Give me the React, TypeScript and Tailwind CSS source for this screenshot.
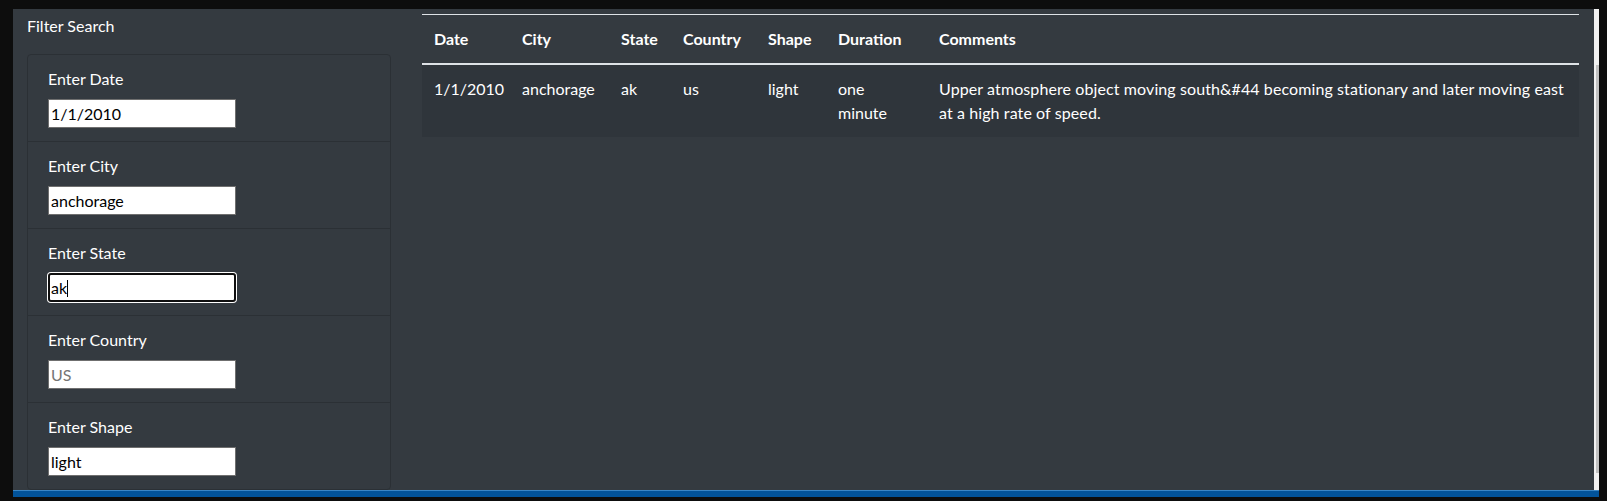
import React from "react";

type Field = { label: string; value: string; placeholder?: string; focused?: boolean };

const fields: Field[] = [
  { label: "Enter Date", value: "1/1/2010" },
  { label: "Enter City", value: "anchorage" },
  { label: "Enter State", value: "ak", focused: true },
  { label: "Enter Country", value: "", placeholder: "US" },
  { label: "Enter Shape", value: "light" },
];

function FieldInput({ f }: { f: Field }) {
  if (f.focused) {
    return (
      <div className="relative w-[188px] h-[29px]">
        <input
          readOnly
          value={f.value}
          className="w-[188px] h-[29px] bg-white text-black text-[16px] border-2 border-[#101010] rounded-[3px] pl-[1px] pr-[2px] outline-none ring-1 ring-white caret-transparent font-['Lato',sans-serif]"
        />
        <span className="absolute left-[19px] top-[7px] w-px h-[17px] bg-black" />
      </div>
    );
  }
  return (
    <input
      readOnly
      value={f.value}
      placeholder={f.placeholder}
      className="w-[188px] h-[29px] bg-white text-black text-[16px] border border-[#6f6f6f] px-[2px] outline-none placeholder:text-[#757575] font-['Lato',sans-serif]"
    />
  );
}

export default function App() {
  return (
    <div className="w-[1607px] h-[501px] bg-[#0d0d0d] pt-[9px] pl-[13px] pr-[8px] pb-[4px] flex flex-col overflow-hidden font-['Lato',sans-serif] text-white text-[16px] leading-[24px]">
      <div className="flex h-[481px]">
        <div className="flex-1 min-w-0 bg-[#343a40] flex overflow-hidden">
          <aside className="w-[378px] shrink-0 pl-[14px]">
            <div className="pt-[5px] h-[45px]">Filter Search</div>
            <div className="w-[364px] border border-[#2b3035] rounded-[4px]">
              {fields.map((f, i) => (
                <div
                  key={f.label}
                  className={
                    i === 0
                      ? "h-[86px] pt-[12px] px-[20px]"
                      : "h-[87px] pt-[12px] px-[20px] border-t border-[#2b3035]"
                  }
                >
                  <div className="h-[24px] mb-[8px]">{f.label}</div>
                  <FieldInput f={f} />
                </div>
              ))}
            </div>
          </aside>
          <main className="ml-[31px] pt-[5px]">
            <table className="w-[1157px] table-fixed border-separate border-spacing-0 text-left">
              <colgroup>
                <col className="w-[88px]" />
                <col className="w-[99px]" />
                <col className="w-[62px]" />
                <col className="w-[85px]" />
                <col className="w-[70px]" />
                <col className="w-[101px]" />
                <col />
              </colgroup>
              <thead>
                <tr>
                  {["Date", "City", "State", "Country", "Shape", "Duration", "Comments"].map((h) => (
                    <th
                      key={h}
                      className="font-bold p-[12px] align-bottom whitespace-nowrap border-t border-b-2 border-[#dee2e6]"
                    >
                      {h}
                    </th>
                  ))}
                </tr>
              </thead>
              <tbody>
                <tr className="bg-[#2f353b] align-top">
                  <td className="p-[12px] whitespace-nowrap">1/1/2010</td>
                  <td className="p-[12px] whitespace-nowrap">anchorage</td>
                  <td className="p-[12px] whitespace-nowrap">ak</td>
                  <td className="p-[12px] whitespace-nowrap">us</td>
                  <td className="p-[12px] whitespace-nowrap">light</td>
                  <td className="p-[12px]">
                    one
                    <br />
                    minute
                  </td>
                  <td className="p-[12px] tracking-[0.1px]">
                    Upper atmosphere object moving south&amp;#44 becoming stationary and later moving east
                    <br />
                    at a high rate of speed.
                  </td>
                </tr>
              </tbody>
            </table>
          </main>
        </div>
        <div className="w-[5px] shrink-0 bg-[#f1f1f1] pt-[56px] pb-[17px] flex">
          <div className="ml-[2px] w-[3px] flex-1 bg-[#c1c1c1]" />
        </div>
      </div>
      <div className="h-[7px] w-[1586px] bg-[#02539a] border-t border-[#3a86c6]" />
    </div>
  );
}
